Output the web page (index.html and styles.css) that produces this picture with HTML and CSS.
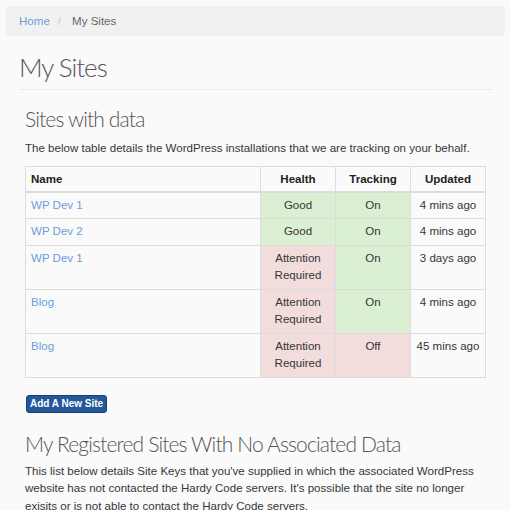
FILE: index.html
```html
<!DOCTYPE html>
<html lang="en">
<head>
<meta charset="utf-8">
<title>My Sites</title>
<link rel="stylesheet" href="styles.css">
</head>
<body>
<nav class="crumbs">
  <a class="crumb-link" href="#">Home</a><span class="crumb-sep">/</span><span class="crumb-cur">My Sites</span>
</nav>
<main class="page">
  <h1 class="page-title">My Sites</h1>
  <hr class="rule">
  <section class="inner">
    <h2 class="sec-title">Sites with data</h2>
    <p class="text">The below table details the WordPress installations that we are tracking on your behalf.</p>
    <table class="sites">
      <thead>
        <tr>
          <th class="c-name">Name</th>
          <th class="c-mid">Health</th>
          <th class="c-mid">Tracking</th>
          <th class="c-mid">Updated</th>
        </tr>
      </thead>
      <tbody>
        <tr>
          <td><a class="link" href="#">WP Dev 1</a></td>
          <td class="ok">Good</td>
          <td class="ok">On</td>
          <td class="mid">4 mins ago</td>
        </tr>
        <tr>
          <td><a class="link" href="#">WP Dev 2</a></td>
          <td class="ok">Good</td>
          <td class="ok">On</td>
          <td class="mid">4 mins ago</td>
        </tr>
        <tr>
          <td><a class="link" href="#">WP Dev 1</a></td>
          <td class="bad">Attention Required</td>
          <td class="ok">On</td>
          <td class="mid">3 days ago</td>
        </tr>
        <tr>
          <td><a class="link" href="#">Blog</a></td>
          <td class="bad">Attention Required</td>
          <td class="ok">On</td>
          <td class="mid">4 mins ago</td>
        </tr>
        <tr>
          <td><a class="link" href="#">Blog</a></td>
          <td class="bad">Attention Required</td>
          <td class="bad">Off</td>
          <td class="mid">45 mins ago</td>
        </tr>
      </tbody>
    </table>
    <button class="btn" type="button">Add A New Site</button>
    <h2 class="sec-title sec-title-2">My Registered Sites With No Associated Data</h2>
    <p class="text text-2">This list below details Site Keys that you've supplied in which the associated WordPress website has not contacted the Hardy Code servers. It's possible that the site no longer exisits or is not able to contact the Hardy Code servers.</p>
  </section>
</main>
</body>
</html>
```

FILE: styles.css
```css
html, body {
  margin: 0;
  padding: 0;
  background: #fafafa;
}
body {
  font-family: "Liberation Sans", Arial, sans-serif;
  font-size: 11.55px;
  line-height: 17.5px;
  color: #363636;
}
.crumbs {
  margin: 6px 5px 0 6px;
  height: 30px;
  line-height: 30px;
  padding: 0 13px;
  background: #f1f1f1;
  border-radius: 4px;
  font-size: 11.55px;
}
.crumb-link {
  color: #6b9ddb;
  text-decoration: none;
}
.crumb-sep {
  color: #c8c8c8;
  padding: 0 11px 0 8px;
}
.crumb-cur {
  color: #666;
}
.page {
  padding: 0 17px 0 19px;
}
.page-title {
  margin: 16px 0 0 0;
  font-family: Lato, "Liberation Sans", sans-serif;
  font-weight: 300;
  font-size: 26px;
  line-height: 30px;
  letter-spacing: -1px;
  color: #555;
}
.rule {
  margin: 7px 0 0 0;
  border: 0;
  border-top: 1px solid #ebebeb;
  height: 0;
}
.inner {
  padding: 0 7px 0 6px;
}
.sec-title {
  margin: 16px 0 0 0;
  font-family: Lato, "Liberation Sans", sans-serif;
  font-weight: 300;
  font-size: 21px;
  line-height: 26px;
  letter-spacing: -0.85px;
  color: #555;
}
.text {
  margin: 8px 0 0 0;
}
.sites {
  margin-top: 8px;
  width: 100%;
  border-collapse: collapse;
  border: 1px solid #dcdcdc;
}
.sites th, .sites td {
  border: 1px solid #dcdcdc;
  padding: 4px 5px;
  vertical-align: top;
  line-height: 17.5px;
}
.sites th {
  font-weight: bold;
  color: #222;
  line-height: 17px;
  padding: 4px 5px 3px;
  border-bottom: 2px solid #dcdcdc;
}
.c-name { text-align: left; }
.c-mid { text-align: center; width: 64px; }
.mid { text-align: center; }
.ok { background: #dbefd3; text-align: center; }
.bad { background: #f2dcdc; text-align: center; }
.link {
  color: #6b9ddb;
  text-decoration: none;
}
.btn {
  display: block;
  margin: 17px 0 0 1px;
  height: 18px;
  padding: 0 3px;
  background: #25589a;
  border: 1px solid #1a4176;
  border-radius: 3px;
  color: #fff;
  font-family: "Liberation Sans", Arial, sans-serif;
  font-weight: bold;
  font-size: 10px;
  line-height: 16px;
}
.sec-title-2 {
  margin-top: 18px;
}
.text-2 {
  margin-top: 6px;
}
```
